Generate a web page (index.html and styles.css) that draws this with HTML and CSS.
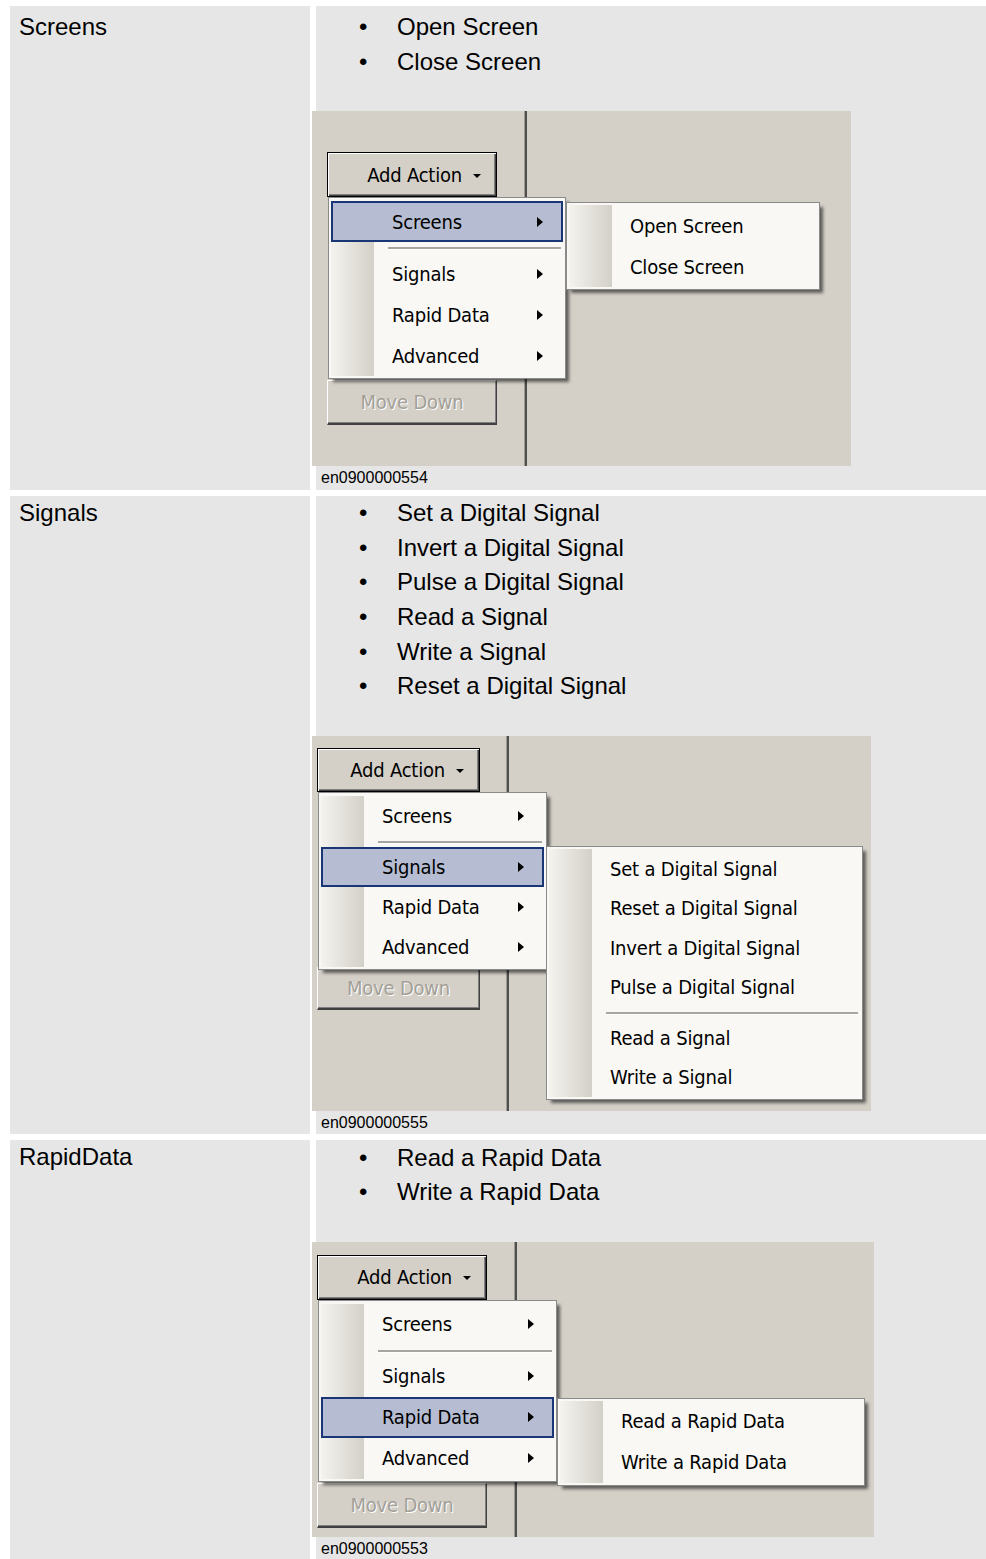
FILE: index.html
```html
<!DOCTYPE html>
<html lang="en">
<head>
<meta charset="utf-8">
<title>Add Action</title>
<link rel="stylesheet" href="styles.css">
</head>
<body>
<div class="table">
  <div class="row row-first">
    <div class="cell label">Screens</div>
    <div class="cell content">
      <ul class="bullets">
        <li>Open Screen</li>
        <li>Close Screen</li>
      </ul>
      <div class="shot shot-1">
        <div class="vline"></div>
        <div class="btn btn-default add">Add Action<span class="drop"></span></div>
        <div class="btn btn-disabled move">Move Down</div>
        <div class="menu main">
          <div class="item hl">Screens<span class="arr"></span></div>
          <div class="sep"></div>
          <div class="item">Signals<span class="arr"></span></div>
          <div class="item">Rapid Data<span class="arr"></span></div>
          <div class="item">Advanced<span class="arr"></span></div>
        </div>
        <div class="menu sub">
          <div class="item">Open Screen</div>
          <div class="item">Close Screen</div>
        </div>
      </div>
      <div class="caption">en0900000554</div>
    </div>
  </div>

  <div class="row">
    <div class="cell label">Signals</div>
    <div class="cell content">
      <ul class="bullets">
        <li>Set a Digital Signal</li>
        <li>Invert a Digital Signal</li>
        <li>Pulse a Digital Signal</li>
        <li>Read a Signal</li>
        <li>Write a Signal</li>
        <li>Reset a Digital Signal</li>
      </ul>
      <div class="shot shot-2">
        <div class="vline"></div>
        <div class="btn btn-default add">Add Action<span class="drop"></span></div>
        <div class="btn btn-disabled move">Move Down</div>
        <div class="menu main">
          <div class="item">Screens<span class="arr"></span></div>
          <div class="sep"></div>
          <div class="item hl">Signals<span class="arr"></span></div>
          <div class="item">Rapid Data<span class="arr"></span></div>
          <div class="item">Advanced<span class="arr"></span></div>
        </div>
        <div class="menu sub">
          <div class="item">Set a Digital Signal</div>
          <div class="item">Reset a Digital Signal</div>
          <div class="item">Invert a Digital Signal</div>
          <div class="item">Pulse a Digital Signal</div>
          <div class="sep"></div>
          <div class="item">Read a Signal</div>
          <div class="item">Write a Signal</div>
        </div>
      </div>
      <div class="caption">en0900000555</div>
    </div>
  </div>

  <div class="row row-last">
    <div class="cell label">RapidData</div>
    <div class="cell content">
      <ul class="bullets">
        <li>Read a Rapid Data</li>
        <li>Write a Rapid Data</li>
      </ul>
      <div class="shot shot-3">
        <div class="vline"></div>
        <div class="btn btn-default add">Add Action<span class="drop"></span></div>
        <div class="btn btn-disabled move">Move Down</div>
        <div class="menu main">
          <div class="item">Screens<span class="arr"></span></div>
          <div class="sep"></div>
          <div class="item">Signals<span class="arr"></span></div>
          <div class="item hl">Rapid Data<span class="arr"></span></div>
          <div class="item">Advanced<span class="arr"></span></div>
        </div>
        <div class="menu sub">
          <div class="item">Read a Rapid Data</div>
          <div class="item">Write a Rapid Data</div>
        </div>
      </div>
      <div class="caption">en0900000553</div>
    </div>
  </div>
</div>
</body>
</html>
```

FILE: styles.css
```css
* { box-sizing: border-box; }

html, body {
  margin: 0;
  padding: 0;
  background: #ffffff;
}

body {
  font-family: "Liberation Sans", Arial, sans-serif;
  color: #000;
}

.table {
  display: flex;
  flex-direction: column;
  gap: 6px;
  padding: 6px 0 0 10px;
}

.row {
  display: grid;
  grid-template-columns: 300px 670px;
  column-gap: 6px;
}

.cell {
  background: #e6e6e6;
}

.row-first .cell {
  padding-top: 4px;
  padding-bottom: 1px;
}

.row-last .content {
  padding-top: 1px;
}

.label {
  font-size: 24px;
  line-height: 34.6px;
  padding-left: 9px;
}

.bullets {
  list-style: none;
  margin: 0;
  padding: 0;
  font-size: 24px;
  line-height: 34.6px;
}

.bullets li {
  margin-left: 43px;
}

.bullets li::before {
  content: "\2022";
  display: inline-block;
  width: 38px;
}

.caption {
  font-size: 16px;
  line-height: 23px;
  padding-left: 5px;
}

/* ---------- screenshot mock ---------- */
.shot {
  position: relative;
  margin: 32px 0 0 -4px;
  background: #d4d0c8;
  font-family: "DejaVu Sans Condensed", "DejaVu Sans", sans-serif;
  font-stretch: condensed;
  font-size: 20px;
  letter-spacing: -0.2px;
  color: #000;
}

.shot-1 { width: 539px; height: 355px; }
.shot-2 { width: 559px; height: 375px; }
.shot-3 { width: 562px; height: 295px; }

.vline {
  position: absolute;
  top: 0;
  bottom: 0;
  width: 3px;
  border-left: 1px solid #9d9a92;
  background: #4f4f4f;
}

.shot-1 .vline { left: 212px; }
.shot-2 .vline { left: 194px; }
.shot-3 .vline { left: 202px; }

.btn {
  position: absolute;
  display: flex;
  align-items: center;
  background: #d4d0c8;
  white-space: nowrap;
}

.btn-default {
  border: 1px solid #000;
  box-shadow: inset 1px 1px 0 #ffffff, inset -1px -1px 0 #404040, inset -2px -2px 0 #808080;
  justify-content: flex-end;
  padding-right: 15px;
  gap: 11px;
}

.btn-disabled {
  border-top: 1px solid #ffffff;
  border-left: 1px solid #ffffff;
  border-right: 1px solid #404040;
  border-bottom: 2px solid #404040;
  box-shadow: inset -1px -1px 0 #808080;
  justify-content: center;
  color: #a3a098;
  text-shadow: 1px 1px 0 #ffffff;
}

.drop {
  width: 0;
  height: 0;
  border-left: 4px solid transparent;
  border-right: 4px solid transparent;
  border-top: 4px solid #000;
  margin-top: 2px;
}

.shot-1 .add  { left: 15px; top: 41px;  width: 170px; height: 45px; }
.shot-1 .move { left: 15px; top: 269px; width: 170px; height: 45px; }
.shot-2 .add  { left: 5px;  top: 12px;  width: 163px; height: 44px; }
.shot-2 .move { left: 5px;  top: 231px; width: 163px; height: 43px; }
.shot-3 .add  { left: 5px;  top: 13px;  width: 170px; height: 45px; }
.shot-3 .move { left: 5px;  top: 241px; width: 170px; height: 45px; }

.menu {
  position: absolute;
  border: 1px solid #8a8a8a;
  background:
    linear-gradient(90deg, #f4f3ee, #d3d0c8) 0 0 / 43px 100% no-repeat content-box,
    #f9f8f4;
  box-shadow: 4px 4px 3px -1px rgba(0, 0, 0, 0.55);
  white-space: nowrap;
}

.menu.main { padding: 3px 2px 2px; }
.menu.sub  { padding: 2px; }

.item {
  height: var(--ih, 41px);
  display: flex;
  align-items: center;
  justify-content: space-between;
  padding: 0 20px 0 61px;
}

.item.hl {
  background: #b6bdd2;
  border: 2px solid #1a3677;
  padding: 0 18px 0 59px;
}

.arr {
  width: 0;
  height: 0;
  border-top: 5px solid transparent;
  border-bottom: 5px solid transparent;
  border-left: 6px solid #000;
}

.sep {
  position: relative;
  height: 11px;
  margin: 0 2px 0 57px;
}

.sep::before {
  content: "";
  position: absolute;
  left: 0;
  right: 0;
  top: 5px;
  height: 2px;
  background: #a6a5a1;
  border-bottom: 1px solid #ffffff;
}

.shot-1 .main { left: 16px;  top: 86px;  width: 238px; --ih: 41px; }
.shot-1 .sub  { left: 254px; top: 91px;  width: 254px; --ih: 41px; }
.shot-2 .main { left: 6px;   top: 56px;  width: 229px; --ih: 40px; }
.shot-2 .sub  { left: 234px; top: 110px; width: 317px; --ih: 39.5px; }
.shot-3 .main { left: 6px;   top: 58px;  width: 239px; --ih: 41px; }
.shot-3 .sub  { left: 245px; top: 156px; width: 308px; --ih: 41px; }
```
